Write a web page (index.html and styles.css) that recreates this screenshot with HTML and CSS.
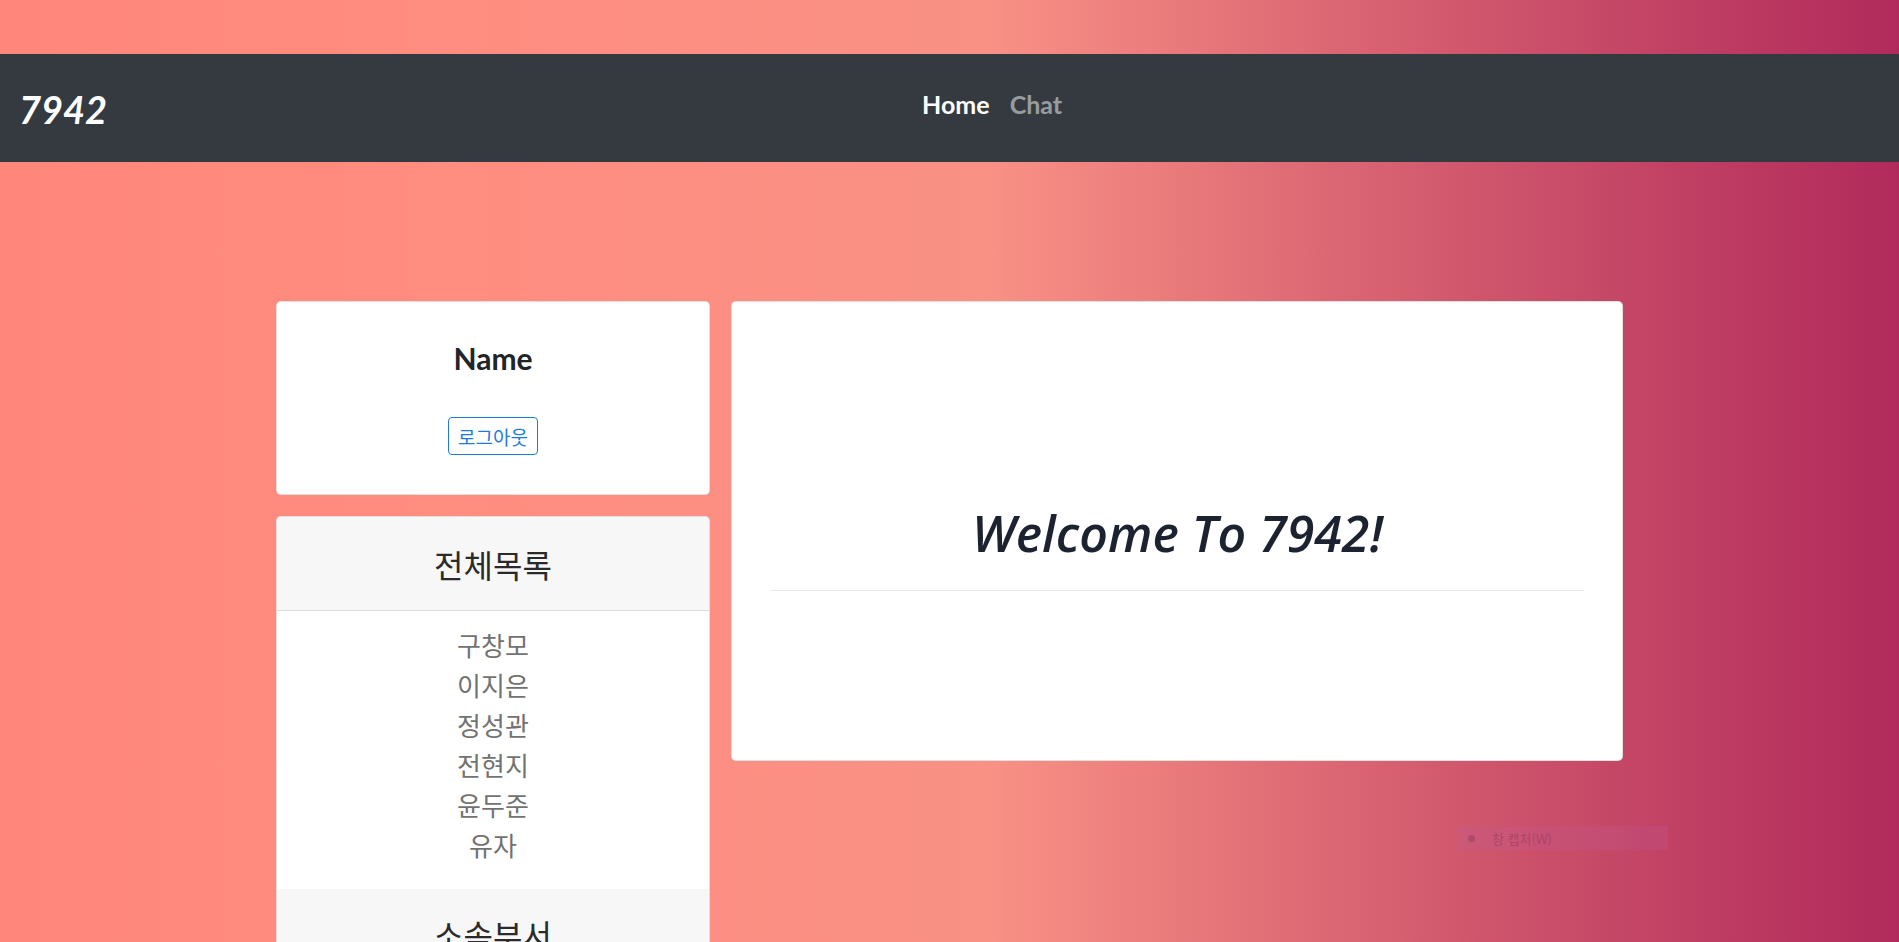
FILE: index.html
```html
<!DOCTYPE html>
<html lang="ko">
<head>
<meta charset="utf-8">
<title>7942</title>
<link rel="stylesheet" href="styles.css">
</head>
<body>
<div class="page">
  <nav class="navbar">
    <a class="brand" href="#">7942</a>
    <ul class="nav">
      <li><a class="nav-link active" href="#">Home</a></li>
      <li><a class="nav-link" href="#">Chat</a></li>
    </ul>
  </nav>

  <main class="container">
    <aside class="side">
      <div class="card profile">
        <h4 class="profile-name">Name</h4>
        <button class="btn-outline" type="button">로그아웃</button>
      </div>

      <div class="card list-card">
        <div class="card-header">전체목록</div>
        <ul class="people">
          <li>구창모</li>
          <li>이지은</li>
          <li>정성관</li>
          <li>전현지</li>
          <li>윤두준</li>
          <li>유자</li>
        </ul>
        <div class="card-header card-header-plain">소속부서</div>
      </div>
    </aside>

    <section class="card welcome">
      <h1 class="welcome-title">Welcome To 7942!</h1>
      <hr class="divider">
    </section>
  </main>
</div>

<div class="capture-hint"><span class="hint-dot"></span><span class="hint-text">창 캡처(W)</span></div>
</body>
</html>
```

FILE: styles.css
```css
* {
  box-sizing: border-box;
}

html, body {
  margin: 0;
  padding: 0;
  height: 100%;
  overflow: hidden;
}

body {
  font-family: "Lato", "Noto Sans CJK KR", sans-serif;
  background: linear-gradient(to right, #ff8177 0%, #ff867a 0%, #ff8c7f 21%, #f99185 52%, #cf556c 78%, #b12a5b 100%);
  color: #212529;
}

.page {
  padding-top: 54px;
}

/* Navbar */
.navbar {
  height: 108px;
  background: #343a40;
  display: flex;
  align-items: center;
  padding: 0 19px;
}

.brand {
  font-family: "Lato", sans-serif;
  font-style: italic;
  font-weight: 700;
  font-size: 38px;
  line-height: 1.2;
  color: #fff;
  text-decoration: none;
  margin-top: 3px;
}

.nav {
  flex: 1;
  display: flex;
  justify-content: center;
  list-style: none;
  margin: 0 3px 9px 0;
  padding: 0;
}

.nav-link {
  display: block;
  padding: 0 10px;
  font-family: "Lato", sans-serif;
  font-weight: 700;
  font-size: 25px;
  line-height: 30px;
  color: rgba(255, 255, 255, 0.5);
  text-decoration: none;
}

.nav-link.active {
  color: #fff;
}

/* Layout */
.container {
  width: 1347px;
  margin: 139px auto 0;
  display: grid;
  grid-template-columns: 434px 892px;
  column-gap: 21px;
  align-items: start;
}

.side {
  display: flex;
  flex-direction: column;
  gap: 21px;
}

.card {
  background: #fff;
  border: 1px solid rgba(0, 0, 0, 0.125);
  border-radius: 5px;
  overflow: hidden;
}

/* Profile card */
.profile {
  height: 194px;
  padding: 38px 20px 0;
  display: flex;
  flex-direction: column;
  align-items: center;
}

.profile-name {
  margin: 0 0 41px;
  font-family: "Lato", sans-serif;
  font-weight: 700;
  font-size: 30px;
  line-height: 36px;
  color: #212529;
}

.btn-outline {
  height: 38px;
  padding: 0 9px;
  border: 1px solid #1f7bd8;
  border-radius: 4px;
  background: #fff;
  color: #1f7bd8;
  font-family: "Noto Sans CJK KR", sans-serif;
  font-size: 19px;
  line-height: 1;
}

/* List card */
.list-card {
  border-bottom: none;
  border-radius: 5px 5px 0 0;
  height: 440px;
}

.card-header {
  height: 94px;
  background: #f7f7f7;
  border-bottom: 1px solid #dcdcdc;
  display: flex;
  align-items: center;
  justify-content: center;
  font-family: "Noto Sans CJK KR", sans-serif;
  font-size: 32px;
  color: #2a2a2a;
}

.card-header-plain {
  border-bottom: none;
  align-items: flex-start;
  padding-top: 22px;
}

.people {
  list-style: none;
  margin: 0;
  padding: 14px 0 24px;
  text-align: center;
  font-family: "Noto Sans CJK KR", sans-serif;
  font-size: 26px;
  line-height: 40px;
  color: #727272;
}

/* Welcome card */
.welcome {
  height: 460px;
  padding: 200px 38px 0 39px;
}

.welcome-title {
  margin: 0;
  height: 62px;
  text-align: center;
  font-family: "Open Sans", sans-serif;
  font-style: italic;
  font-weight: 600;
  font-size: 50px;
  line-height: 62px;
  color: #1c2230;
}

.divider {
  margin: 26px 0 0;
  border: 0;
  border-top: 1px solid #e6e6e6;
}

/* Screen capture hint overlay */
.capture-hint {
  position: absolute;
  left: 1457px;
  top: 826px;
  width: 211px;
  height: 24px;
  background: rgba(190, 100, 170, 0.18);
  display: flex;
  align-items: center;
  font-family: "Noto Sans CJK KR", sans-serif;
  font-size: 13px;
  color: rgba(110, 40, 80, 0.35);
}

.hint-dot {
  width: 7px;
  height: 7px;
  border-radius: 50%;
  background: rgba(110, 40, 80, 0.3);
  margin: 0 17px 0 11px;
}
```
